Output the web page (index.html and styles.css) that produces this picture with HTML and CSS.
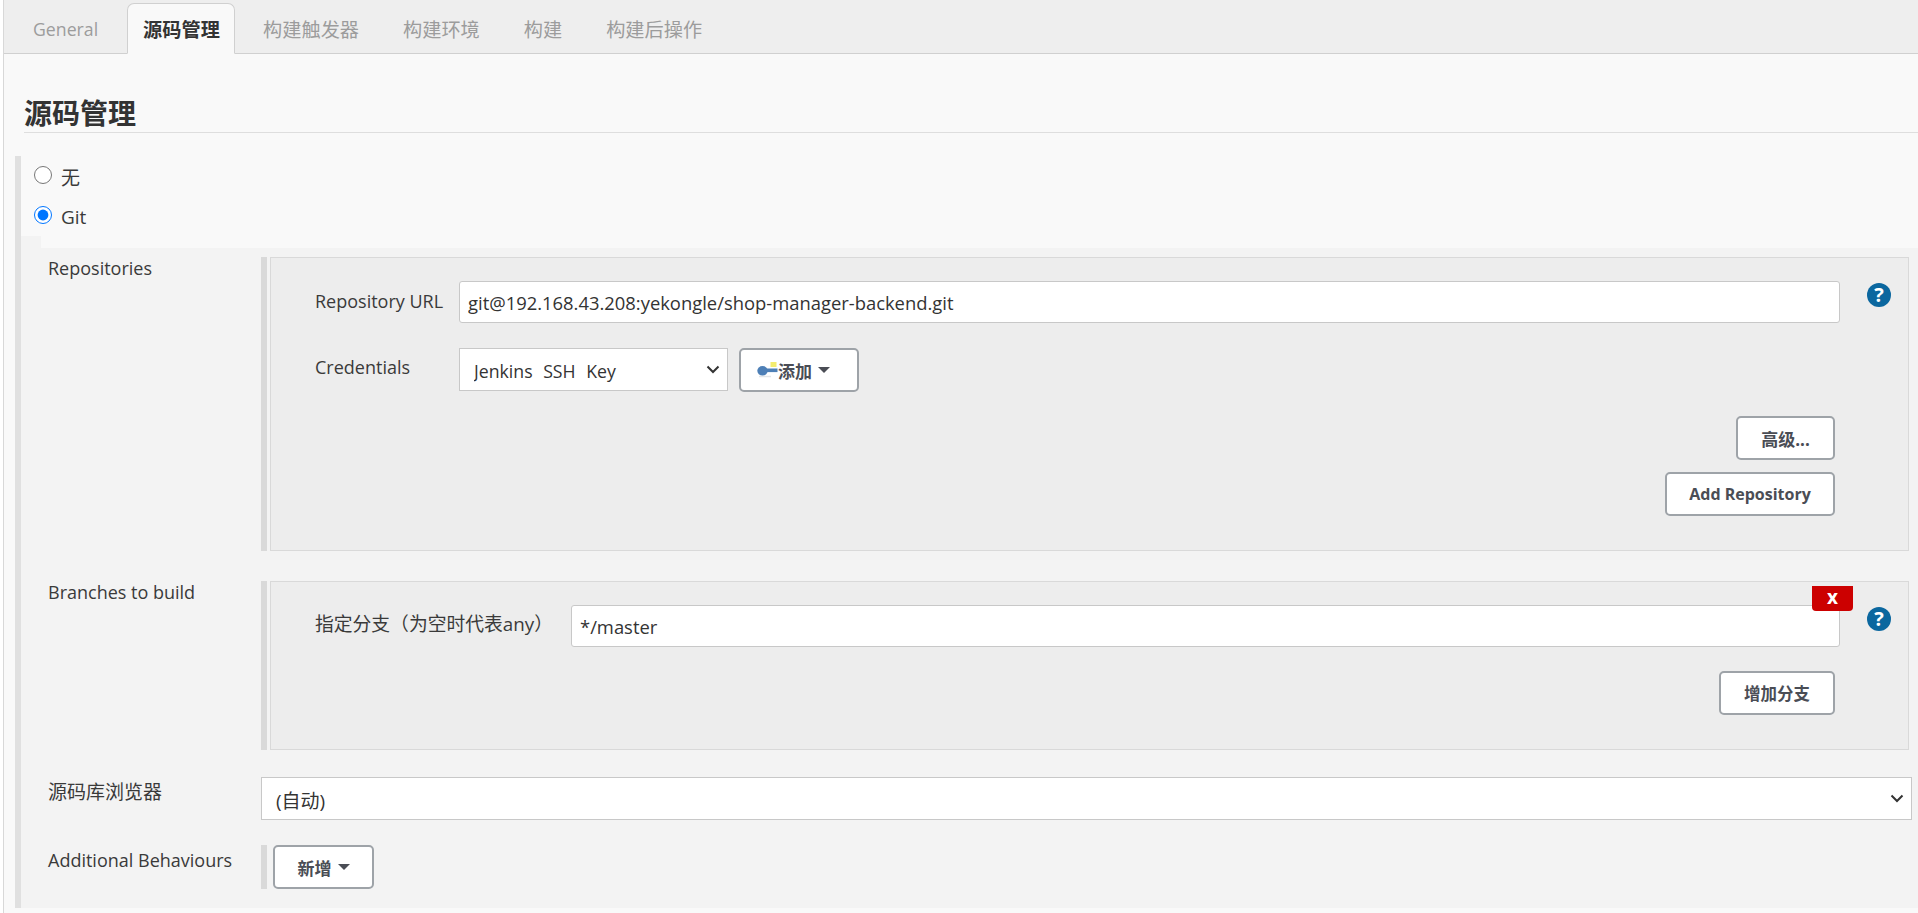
FILE: index.html
```html
<!DOCTYPE html>
<html lang="zh-CN">
<head>
<meta charset="utf-8">
<title>源码管理</title>
<link rel="stylesheet" href="styles.css">
</head>
<body>
<div class="page">
  <nav class="tabs">
    <a class="tab tab-first">General</a>
    <a class="tab tab-active">源码管理</a>
    <a class="tab">构建触发器</a>
    <a class="tab">构建环境</a>
    <a class="tab">构建</a>
    <a class="tab">构建后操作</a>
  </nav>
  <h2 class="heading">源码管理</h2>
  <section class="scm">
    <label class="radio-row radio-none"><input type="radio" name="scm"><span>无</span></label>
    <label class="radio-row radio-git"><input type="radio" name="scm" checked><span>Git</span></label>
    <div class="git-config">
      <div class="row row-repo">
        <div class="row-label">Repositories</div>
        <div class="box">
          <div class="box-inner box-repo">
            <div class="field">
              <label class="field-label label-url">Repository URL</label>
              <input class="text-input" type="text" value="git@192.168.43.208:yekongle/shop-manager-backend.git">
              <span class="help">?</span>
            </div>
            <div class="field field-cred">
              <label class="field-label label-url label-cred">Credentials</label>
              <select class="select select-cred"><option>Jenkins SSH Key</option></select>
              <button class="btn btn-add" type="button">
                <svg class="key" viewBox="0 0 22 16" width="22" height="16" aria-hidden="true">
                  <rect x="13.5" y="0" width="6" height="5" fill="#f4ec6e"/>
                  <path d="M2 14.5h12" stroke="#e2e5e8" stroke-width="1.5"/>
                  <ellipse cx="5.5" cy="8.8" rx="5.2" ry="4.8" fill="#4d7fb6"/>
                  <rect x="8" y="6.5" width="12.5" height="3.6" fill="#4d7fb6"/>
                </svg>添加<i class="caret"></i>
              </button>
            </div>
            <div class="actions">
              <button class="btn btn-adv" type="button">高级...</button>
              <button class="btn btn-addrepo" type="button">Add Repository</button>
            </div>
          </div>
        </div>
      </div>
      <div class="row row-branch">
        <div class="row-label">Branches to build</div>
        <div class="box">
          <div class="box-inner box-branch">
            <button class="btn-x" type="button">x</button>
            <div class="field">
              <label class="field-label label-branch">指定分支（为空时代表any）</label>
              <input class="text-input" type="text" value="*/master">
              <span class="help">?</span>
            </div>
            <div class="actions">
              <button class="btn btn-branch" type="button">增加分支</button>
            </div>
          </div>
        </div>
      </div>
      <div class="row row-browser">
        <div class="row-label row-label-cjk">源码库浏览器</div>
        <select class="select select-browser"><option>(自动)</option></select>
      </div>
      <div class="row row-behave">
        <div class="row-label">Additional Behaviours</div>
        <div class="behave">
          <button class="btn btn-new" type="button">新增<i class="caret"></i></button>
        </div>
      </div>
    </div>
  </section>
</div>
</body>
</html>
```
FILE: styles.css
```css
* { box-sizing: border-box; }
html, body { margin: 0; padding: 0; }
body {
  width: 1918px;
  height: 913px;
  overflow: hidden;
  background: #fff;
  font-family: "Open Sans", "Noto Sans CJK SC", sans-serif;
  font-size: 18px;
  color: #3a3a3a;
}
.page {
  margin-left: 3px;
  height: 913px;
  border-left: 1px solid #d8d8d8;
  background: #f9f9f9;
  display: flex;
  flex-direction: column;
}
.tabs {
  height: 54px;
  flex: none;
  display: flex;
  align-items: flex-end;
  background: #eeeeee;
  border-bottom: 1px solid #d0d0d0;
  padding-left: 12px;
}
.tab {
  height: 51px;
  margin-bottom: -1px;
  padding: 0 16px;
  margin-right: 10px;
  display: flex;
  align-items: center;
  white-space: nowrap;
  font-size: 19.2px;
  color: #9c9c9c;
  border: 1px solid transparent;
}
.tab-first { margin-right: 12px; font-size: 17.7px; }
.tab-active {
  padding: 0 15px;
  margin-right: 11px;
  width: 108px;
  background: #f9f9f9;
  border-color: #d0d0d0;
  border-bottom-color: #f9f9f9;
  border-radius: 7px 7px 0 0;
  color: #333;
  font-weight: 700;
}
.heading {
  flex: none;
  margin: 0 0 0 20px;
  height: 79px;
  padding-top: 42px;
  line-height: 34px;
  font-size: 28px;
  font-weight: 700;
  color: #333;
  border-bottom: 1px solid #dedede;
}
.scm {
  flex: none;
  margin: 23px 0 0 11px;
  height: 752px;
  border-left: 6px solid #e0e0e0;
  display: flex;
  flex-direction: column;
}
.radio-row {
  display: flex;
  align-items: center;
  height: 40px;
  padding-left: 13px;
  flex: none;
}
.radio-row input {
  width: 18px;
  height: 18px;
  margin: -2px 9px 0 0;
  flex: none;
}
.radio-row span { font-size: 19px; margin-top: 2px; }
.git-config {
  margin-top: 0;
  height: 672px;
  flex: none;
  padding: 21px 6px 0 27px;
  background: linear-gradient(#f9f9f9, #f9f9f9) 20px 0 / 100% 12px no-repeat, #f3f3f3;
}
.row {
  display: flex;
  align-items: flex-start;
}
.row-label {
  width: 213px;
  flex: none;
  margin-top: -1px;
  line-height: 24px;
  white-space: nowrap;
}
.row-branch { margin-top: 30px; }
.row-browser { margin-top: 27px; }
.row-behave { margin-top: 25px; }
.row-browser .row-label { margin-top: 3px; }
.row-label-cjk { font-size: 19px; }
.row-behave .row-label { margin-top: 3px; }
.box {
  width: 1648px;
  flex: none;
  border-left: 6px solid #d9d9d9;
  padding-left: 3px;
}
.box-inner {
  position: relative;
  background: #ededed;
  border: 1px solid #d9d9d9;
  padding-left: 44px;
}
.box-repo { height: 294px; padding-top: 23px; }
.box-branch { height: 169px; padding-top: 23px; }
.field {
  display: flex;
  align-items: flex-start;
  padding-right: 17px;
}
.field-cred {
  margin-top: 25px;
}
.field-label {
  flex: none;
  line-height: 24px;
  padding-top: 8px;
  white-space: nowrap;
}
.label-url { width: 144px; }
.label-cred { padding-top: 7px; }
.label-branch { width: 256px; padding-top: 7px; font-size: 18.8px; }
.text-input {
  flex: 1;
  min-width: 0;
  height: 42px;
  margin-right: 27px;
  padding: 0 8px;
  background: #fff;
  border: 1px solid #c8c8c8;
  border-radius: 3px;
  font: inherit;
  font-size: 18.4px;
  color: #333;
  outline: none;
}
.help {
  flex: none;
  width: 24px;
  height: 24px;
  margin-top: 2px;
  border-radius: 50%;
  background: #0b679f;
  color: #fff;
  font-size: 20px;
  font-weight: 700;
  line-height: 24px;
  text-align: center;
}
.select {
  appearance: none;
  -webkit-appearance: none;
  height: 43px;
  background: #fff url("data:image/svg+xml,%3Csvg xmlns='http://www.w3.org/2000/svg' width='14' height='9' viewBox='0 0 14 9'%3E%3Cpath d='M1.5 1.5L7 7l5.5-5.5' fill='none' stroke='%23333' stroke-width='2'/%3E%3C/svg%3E") no-repeat right 7px center;
  border: 1px solid #c8c8c8;
  border-radius: 0;
  font: inherit;
  color: #333;
  outline: none;
}
.select-cred {
  width: 269px;
  flex: none;
  padding: 3px 0 0 14px;
  font-size: 17.7px;
  word-spacing: 6px;
}
.select-browser {
  width: 1651px;
  flex: none;
  padding: 5px 0 0 14px;
  font-size: 19px;
}
.btn {
  display: inline-flex;
  align-items: center;
  justify-content: center;
  height: 44px;
  padding: 0;
  background: #fff;
  border: 2px solid #9ea3a8;
  border-radius: 5px;
  font: inherit;
  font-size: 17px;
  font-weight: 700;
  color: #4a4d55;
}
.btn-add {
  flex: none;
  width: 120px;
  margin-left: 11px;
  justify-content: flex-start;
  padding-left: 16px;
}
.key { flex: none; margin-right: -1px; }
.caret {
  display: inline-block;
  width: 0;
  height: 0;
  margin-left: 6px;
  border-left: 6px solid transparent;
  border-right: 6px solid transparent;
  border-top: 6px solid #4a4d55;
}
.actions {
  display: flex;
  flex-direction: column;
  align-items: flex-end;
  padding-right: 73px;
  margin-top: 24px;
}
.btn-adv { width: 99px; }
.btn-addrepo { width: 170px; margin-top: 12px; font-size: 16px; }
.btn-branch { width: 116px; font-size: 16.5px; }
.btn-x {
  position: absolute;
  top: 4px;
  right: 55px;
  width: 41px;
  height: 25px;
  padding: 0 0 3px;
  background: #cc0000;
  border: 0;
  border-radius: 0 0 4px 4px;
  color: #fff;
  font: inherit;
  font-size: 19px;
  font-weight: 700;
  line-height: 1;
}
.behave {
  border-left: 6px solid #d9d9d9;
  padding-left: 6px;
  height: 44px;
}
.btn-new { width: 101px; }
```
